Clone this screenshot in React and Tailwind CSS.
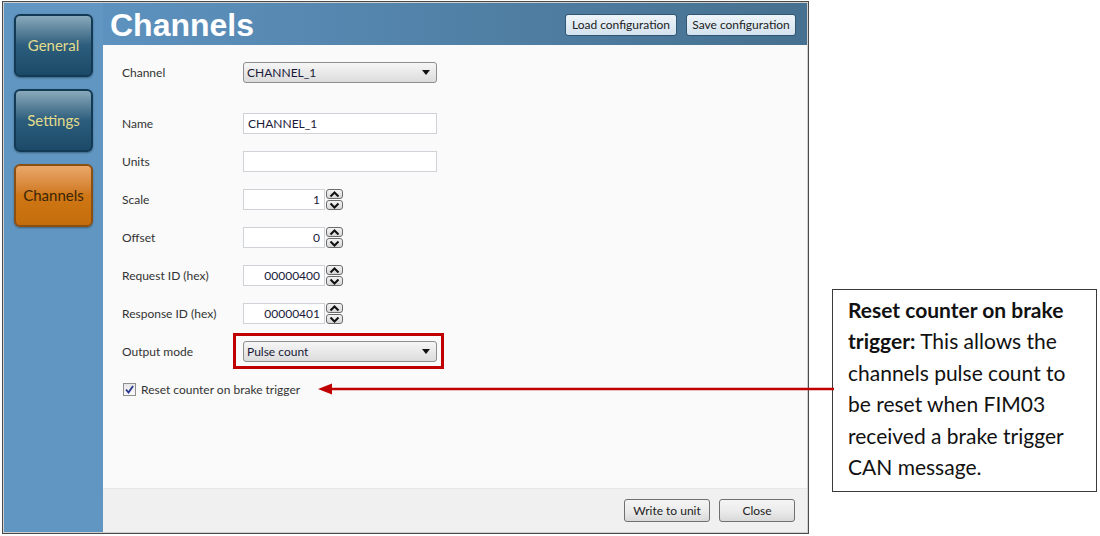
import { useState } from "react";

const uiFont = { fontFamily: "Lato, 'Noto Sans', sans-serif" };

const SideButton = ({ label, active }) => (
  <div
    className={`w-[79px] h-[63px] rounded-[6px] border-2 flex items-center justify-center text-[15px] shadow-[0_1px_2px_rgba(0,0,0,0.35)] ${
      active
        ? "border-[#8c4f12] bg-gradient-to-b from-[#e9a869] via-[#cf7714] to-[#c46d0c] text-[#3b2508]"
        : "border-[#123a55] bg-gradient-to-b from-[#8aaabb] via-[#2c5d7c] to-[#1b4a68] text-[#e3dc8c]"
    }`}
  >
    {label}
  </div>
);

const Label = ({ children }) => (
  <div className="w-[121px] text-[12px] text-[#333]">{children}</div>
);

const Select = ({ value }) => (
  <div className="w-[194px] h-[21px] rounded-[3px] border border-[#8e8e8e] bg-gradient-to-b from-[#f6f6f6] to-[#dcdcdc] flex items-center justify-between px-[3px] text-[12px] text-[#1a1a3a]">
    <span>{value}</span>
    <svg width="8" height="5" viewBox="0 0 8 5" className="mr-[3px]">
      <path d="M0 0h8L4 5z" fill="#111" />
    </svg>
  </div>
);

const TextBox = ({ value, w = "w-[194px]", right }) => (
  <div
    className={`${w} h-[21px] border border-[#cfd3d8] bg-white flex items-center px-[4px] text-[12px] text-[#1a1a3a] ${
      right ? "justify-end" : ""
    }`}
  >
    {value}
  </div>
);

const Chevron = ({ up }) => (
  <div className="w-[17px] h-[10px] rounded-[3px] border border-[#6b6b6b] bg-gradient-to-b from-[#f4f4f4] to-[#d8d8d8] flex items-center justify-center">
    <svg width="11" height="7" viewBox="0 0 11 7">
      <path
        d={up ? "M1.5 5.5 5.5 1.5 9.5 5.5" : "M1.5 1.5 5.5 5.5 9.5 1.5"}
        fill="none"
        stroke="#111"
        strokeWidth="2"
      />
    </svg>
  </div>
);

const Spinner = ({ value }) => (
  <div className="flex items-center gap-[1px]">
    <TextBox value={value} w="w-[82px]" right />
    <div className="flex flex-col gap-[1px]">
      <Chevron up />
      <Chevron />
    </div>
  </div>
);

const WinButton = ({ children, w }) => (
  <div
    className={`${w} h-[23px] rounded-[3px] border border-[#707070] bg-gradient-to-b from-[#f4f4f4] via-[#ececec] to-[#d9d9d9] flex items-center justify-center text-[12px] text-[#222]`}
  >
    {children}
  </div>
);

const HeadButton = ({ children, w }) => (
  <div
    className={`${w} h-[22px] rounded-[3px] border border-[#2f5673] bg-gradient-to-b from-[#eef4f9] to-[#d3e2ee] flex items-center justify-center text-[12px] text-[#222]`}
  >
    {children}
  </div>
);

export default function App() {
  const [checked] = useState(true);

  return (
    <div className="relative w-[1100px] h-[536px] bg-white overflow-hidden" style={uiFont}>
      <div className="flex items-start">
        {/* window */}
        <div className="ml-[2px] mt-[1px] w-[807px] h-[533px] border border-[#4a4a4a] bg-[#d0d0d0] p-[1px]">
          <div className="flex h-full">
            <div className="w-[99px] bg-[#6096c1] flex flex-col gap-[12px] pl-[10px] pt-[11px]">
              <SideButton label="General" />
              <SideButton label="Settings" />
              <SideButton label="Channels" active />
            </div>
            <div className="flex-1 flex flex-col">
              <div className="h-[42px] bg-gradient-to-r from-[#5d92bf] to-[#46708f] flex items-center justify-between pl-[7px] pr-[11px]">
                <div
                  className="text-[32px] font-bold text-white leading-none mt-[2px]"
                  style={{ fontFamily: "'Liberation Sans', Arial, sans-serif" }}
                >
                  Channels
                </div>
                <div className="flex gap-[9px] mt-[2px]">
                  <HeadButton w="w-[112px]">Load configuration</HeadButton>
                  <HeadButton w="w-[110px]">Save configuration</HeadButton>
                </div>
              </div>
              <div className="flex-1 bg-[#fafafa] pl-[19px] pt-[17px] flex flex-col">
                <div className="flex items-center h-[21px]">
                  <Label>Channel</Label>
                  <Select value="CHANNEL_1" />
                </div>
                <div className="flex flex-col gap-[17px] mt-[30px]">
                  <div className="flex items-center h-[21px]">
                    <Label>Name</Label>
                    <TextBox value="CHANNEL_1" />
                  </div>
                  <div className="flex items-center h-[21px]">
                    <Label>Units</Label>
                    <TextBox value="" />
                  </div>
                  <div className="flex items-center h-[21px]">
                    <Label>Scale</Label>
                    <Spinner value="1" />
                  </div>
                  <div className="flex items-center h-[21px]">
                    <Label>Offset</Label>
                    <Spinner value="0" />
                  </div>
                  <div className="flex items-center h-[21px]">
                    <Label>Request ID (hex)</Label>
                    <Spinner value="00000400" />
                  </div>
                  <div className="flex items-center h-[21px]">
                    <Label>Response ID (hex)</Label>
                    <Spinner value="00000401" />
                  </div>
                  <div className="flex items-center h-[21px]">
                    <Label>Output mode</Label>
                    <div className="relative">
                      <Select value="Pulse count" />
                      <div className="absolute left-[-10px] right-[-7px] top-[-8px] bottom-[-7px] border-[3px] border-[#c00000]" />
                    </div>
                  </div>
                  <div className="flex items-center h-[21px] gap-[5px] pl-[1px]">
                    <div className="w-[13px] h-[13px] border border-[#8f8f8f] bg-gradient-to-b from-[#e6e6e6] to-[#fafafa] flex items-center justify-center">
                      {checked && (
                        <svg width="9" height="9" viewBox="0 0 9 9">
                          <path d="M1 4.5 3.5 7.5 8 1" fill="none" stroke="#26348b" strokeWidth="1.8" />
                        </svg>
                      )}
                    </div>
                    <span className="text-[12px] text-[#333]">Reset counter on brake trigger</span>
                  </div>
                </div>
              </div>
              <div className="h-[44px] bg-[#f0f0f0] border-t border-[#e6e6e6] flex items-center justify-end gap-[9px] pr-[12px]">
                <WinButton w="w-[86px]">Write to unit</WinButton>
                <WinButton w="w-[76px]">Close</WinButton>
              </div>
            </div>
          </div>
        </div>

        {/* callout */}
        <div
          className="ml-[23px] mt-[289px] w-[265px] h-[203px] border border-[#3a3a3a] pl-[15px] pt-[4px] text-[21px] leading-[31.4px] text-[#111] whitespace-nowrap"
          style={{ fontFamily: "Lato, 'Open Sans', sans-serif" }}
        >
          <span className="font-bold">Reset counter on brake</span>
          <br />
          <span className="font-bold">trigger:</span> This allows the
          <br />
          channels pulse count to
          <br />
          be reset when FIM03
          <br />
          received a brake trigger
          <br />
          CAN message.
        </div>
      </div>

      {/* arrow */}
      <svg className="absolute left-[318px] top-[382px]" width="516" height="14" viewBox="0 0 516 14">
        <path d="M12 7H516" stroke="#c00000" strokeWidth="2.5" />
        <path d="M0 7 14 1.5V12.5z" fill="#c00000" />
      </svg>
    </div>
  );
}
